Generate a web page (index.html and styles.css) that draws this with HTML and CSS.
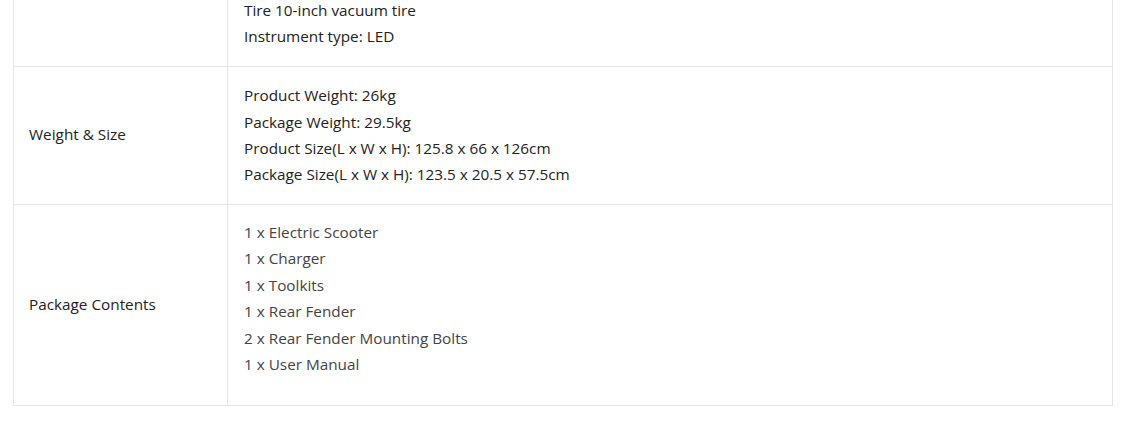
FILE: index.html
```html
<!DOCTYPE html>
<html>
<head>
<meta charset="utf-8">
<link rel="stylesheet" href="styles.css">
</head>
<body>
<table class="spec">
  <colgroup><col class="col-label"><col></colgroup>
  <tr>
    <td class="label"></td>
    <td class="value">
      <p>Tire 10-inch vacuum tire</p>
      <p>Instrument type: LED</p>
    </td>
  </tr>
  <tr>
    <td class="label">Weight &amp; Size</td>
    <td class="value weight">
      <p>Product Weight: 26kg</p>
      <p>Package Weight: 29.5kg</p>
      <p>Product Size(L x W x H): 125.8 x 66 x 126cm</p>
      <p>Package Size(L x W x H): 123.5 x 20.5 x 57.5cm</p>
    </td>
  </tr>
  <tr>
    <td class="label">Package Contents</td>
    <td class="value contents">
      <p>1 x Electric Scooter</p>
      <p>1 x Charger</p>
      <p>1 x Toolkits</p>
      <p>1 x Rear Fender</p>
      <p>2 x Rear Fender Mounting Bolts</p>
      <p>1 x User Manual</p>
    </td>
  </tr>
</table>
</body>
</html>
```

FILE: styles.css
```css
html, body {
  margin: 0;
  padding: 0;
  background: #fff;
}
body {
  font-family: "Open Sans", "Liberation Sans", sans-serif;
  color: #222;
}
.spec {
  border-collapse: collapse;
  width: 1100px;
  margin: -20px 0 0 13px;
  table-layout: fixed;
}
.col-label {
  width: 214px;
}
.spec td {
  border: 1px solid #e6e6e6;
  vertical-align: middle;
}
.label {
  font-size: 15.3px;
  color: #222;
  padding: 0 15px 2px 15px;
}
.value {
  font-size: 15.3px;
  line-height: 26.4px;
  padding: 16px;
  color: #222;
}
.value p {
  margin: 0;
}
.weight {
  line-height: 26.3px;
  padding: 15.5px 16px 16px 16px;
}
.contents {
  color: #444;
  padding: 14.5px 16px 27.5px 16px;
}
```
